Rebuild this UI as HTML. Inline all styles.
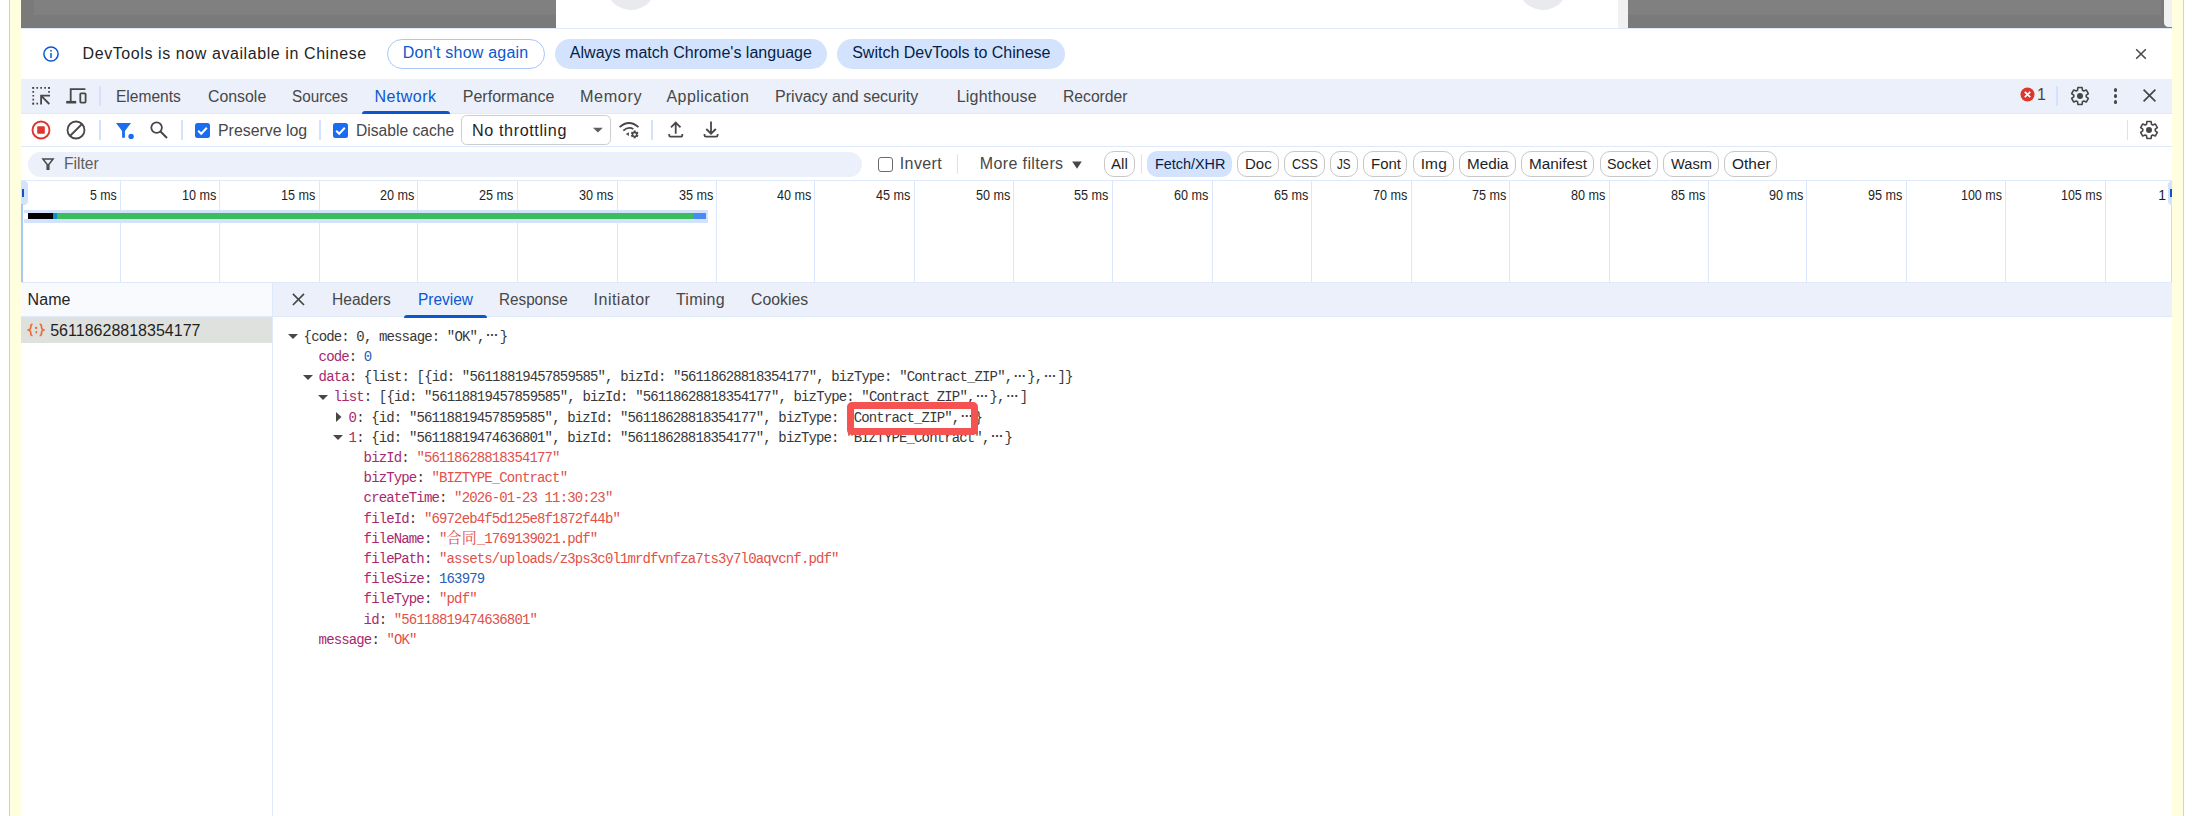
<!DOCTYPE html>
<html lang="en"><head><meta charset="utf-8"><title>DevTools - Network</title>
<style>
html,body{margin:0;padding:0;background:#fff;}
body{width:2210px;height:816px;overflow:hidden;position:relative;font-family:"Liberation Sans",sans-serif;}
body>div,body>svg,body>pre{position:absolute;box-sizing:border-box;}
.t{height:20px;line-height:20px;white-space:pre;}

.j{height:20px;line-height:20px;white-space:pre;font-family:"Liberation Mono","Noto Serif CJK SC",monospace;font-size:14px;letter-spacing:-0.862px;color:#383838;}
.j .k{color:#a8286e}.j .s{color:#e2504a}.j .n{color:#2a5db8}.j .g{color:#5e5e5e}
.j .e{display:inline-block;width:15.08px;text-align:center;letter-spacing:0;position:relative;top:-4.500px;font-family:'Liberation Sans',sans-serif;font-size:12.500px;font-weight:bold;line-height:10px;}
.j .c{font-family:"Liberation Mono","Noto Serif CJK SC",serif;font-size:15px;letter-spacing:0.08px;line-height:0;}
.pill{border:1px solid #c7c7c7;border-radius:10px;background:#fff;}

</style></head><body>
<div style="left:9px;top:0px;width:1px;height:816px;background:#cfcfcf;"></div>
<div style="left:10px;top:0px;width:11px;height:816px;background:#ffffe0;"></div>
<div style="left:2172px;top:0px;width:11px;height:816px;background:#ffffe0;"></div>
<div style="left:2183px;top:0px;width:1px;height:816px;background:#d2d2d2;"></div>
<div style="left:21px;top:0px;width:535px;height:28px;background:#7a7a7a;"></div>
<div style="left:34px;top:0px;width:522px;height:15px;background:#808080;"></div>
<div style="left:1628px;top:0px;width:544px;height:28px;background:#7a7a7a;"></div>
<div style="left:1628px;top:0px;width:533px;height:15px;background:#808080;"></div>
<div style="left:1618px;top:0px;width:10px;height:28px;background:#f1f1f1;"></div>
<div style="left:2163.6px;top:0px;width:8.4px;height:27.3px;background:#f1f1f1;border-radius:0 0 0 4.500px;"></div>
<div style="left:606px;top:-40.5px;width:50px;height:50px;background:#e8eaed;border-radius:50%;"></div>
<div style="left:1518.4px;top:-40.5px;width:50px;height:50px;background:#e8eaed;border-radius:50%;"></div>
<div style="left:21px;top:28px;width:2151px;height:1px;background:#dfe9fc;"></div>
<svg style="left:42px;top:44.5px;" width="18" height="18" viewBox="0 0 18 18"><circle cx="9" cy="9" r="7.1" fill="none" stroke="#0b57d0" stroke-width="1.5"/><rect x="8.25" y="8" width="1.5" height="5" fill="#0b57d0"/><rect x="8.25" y="5" width="1.5" height="1.6" fill="#0b57d0"/></svg>
<div class="t" style="left:82.60px;top:44.06px;font-size:16px;color:#1f1f1f;letter-spacing:0.581px;">DevTools is now available in Chinese</div>
<div style="left:386.5px;top:39px;width:158.5px;height:30px;background:#fff;border:1px solid #a8c7fa;border-radius:15px;"></div>
<div class="t" style="left:402.80px;top:43.46px;font-size:16px;color:#0b57d0;letter-spacing:0.210px;">Don't show again</div>
<div style="left:555px;top:39px;width:271.5px;height:30px;background:#d3e3fd;border-radius:15px;"></div>
<div class="t" style="left:569.80px;top:43.46px;font-size:16px;color:#041e49;letter-spacing:0.024px;">Always match Chrome's language</div>
<div style="left:837px;top:39px;width:228px;height:30px;background:#d3e3fd;border-radius:15px;"></div>
<div class="t" style="left:852.20px;top:43.46px;font-size:16px;color:#041e49;letter-spacing:0.000px;">Switch DevTools to Chinese</div>
<svg style="left:2134px;top:47px;" width="14" height="14" viewBox="0 0 14 14"><path d="M2.2 2.2L11.8 11.8M11.8 2.2L2.2 11.8" stroke="#474747" stroke-width="1.5" fill="none"/></svg>
<div style="left:21px;top:79px;width:2151px;height:34.5px;background:#ecf0fa;"></div>
<div style="left:21px;top:113px;width:2151px;height:1px;background:#dfe9fc;"></div>
<svg style="left:31px;top:86px;" width="21" height="21" viewBox="0 0 21 21"><g fill="none" stroke="#474747" stroke-width="1.700"><path d="M1.400 1.850H18.900" stroke-dasharray="1.700 2.250"/><path d="M2.250 1V18.500" stroke-dasharray="1.700 2.250"/><path d="M18.050 1V7" stroke-dasharray="1.700 2.250"/><path d="M1.400 17.650H7.500" stroke-dasharray="1.700 2.250"/></g><path d="M18.300 18L10 9.700M10.100 18.500V9.650H19" fill="none" stroke="#474747" stroke-width="1.800"/></svg>
<svg style="left:65px;top:86px;" width="23" height="21" viewBox="0 0 23 21"><path d="M5.700 15.200V3.200H20.400" fill="none" stroke="#474747" stroke-width="1.800"/><path d="M1.200 16.200H11.200" stroke="#474747" stroke-width="2.600"/><rect x="15.300" y="7.300" width="5.300" height="9.300" rx="0.800" fill="none" stroke="#474747" stroke-width="1.800"/></svg>
<div style="left:99.3px;top:86px;width:1.6px;height:20px;background:#d3e3fd;"></div>
<div class="t" style="left:116.00px;top:86.86px;font-size:16px;color:#474747;letter-spacing:0.000px;transform:scaleX(0.9715);transform-origin:0 0;">Elements</div>
<div class="t" style="left:207.50px;top:86.86px;font-size:16px;color:#474747;letter-spacing:0.000px;transform:scaleX(0.9914);transform-origin:0 0;">Console</div>
<div class="t" style="left:292.20px;top:86.86px;font-size:16px;color:#474747;letter-spacing:0.000px;transform:scaleX(0.9540);transform-origin:0 0;">Sources</div>
<div class="t" style="left:374.50px;top:86.86px;font-size:16px;color:#0b57d0;letter-spacing:0.469px;">Network</div>
<div class="t" style="left:462.80px;top:86.86px;font-size:16px;color:#474747;letter-spacing:0.000px;">Performance</div>
<div class="t" style="left:579.60px;top:86.86px;font-size:16px;color:#474747;letter-spacing:0.600px;transform:scaleX(1.0135);transform-origin:0 0;">Memory</div>
<div class="t" style="left:666.50px;top:86.86px;font-size:16px;color:#474747;letter-spacing:0.412px;">Application</div>
<div class="t" style="left:775.10px;top:86.86px;font-size:16px;color:#474747;letter-spacing:0.000px;">Privacy and security</div>
<div class="t" style="left:956.80px;top:86.86px;font-size:16px;color:#474747;letter-spacing:0.178px;">Lighthouse</div>
<div class="t" style="left:1062.70px;top:86.86px;font-size:16px;color:#474747;letter-spacing:0.000px;transform:scaleX(0.9801);transform-origin:0 0;">Recorder</div>
<div style="left:362px;top:110.5px;width:88px;height:3px;background:#0b57d0;border-radius:3px 3px 0 0;"></div>
<svg style="left:2019.5px;top:87.1px;" width="15" height="15" viewBox="0 0 15 15"><circle cx="7.5" cy="7.5" r="7" fill="#dc362e"/><path d="M4.8 4.8l5.4 5.4M10.2 4.8l-5.4 5.4" stroke="#fff" stroke-width="1.7"/></svg>
<div class="t" style="left:2037.00px;top:85.16px;font-size:16px;color:#474747;letter-spacing:0.000px;">1</div>
<div style="left:2056.1px;top:86px;width:1.6px;height:19.7px;background:#d3e3fd;"></div>
<svg style="left:2070.4px;top:85.7px;" width="20" height="20" viewBox="0 0 20 20"><path d="M7.54 4.20L7.90 1.56L12.10 1.56L12.46 4.20L13.79 4.97L16.26 3.96L18.36 7.60L16.25 9.23L16.25 10.77L18.36 12.40L16.26 16.04L13.79 15.03L12.46 15.80L12.10 18.44L7.90 18.44L7.54 15.80L6.21 15.03L3.74 16.04L1.64 12.40L3.75 10.77L3.75 9.23L1.64 7.60L3.74 3.96L6.21 4.97z" fill="none" stroke="#474747" stroke-width="1.600" stroke-linejoin="round"/><circle cx="10" cy="10" r="3" fill="#474747"/></svg>
<div style="left:2113.6px;top:88.3px;width:3.8px;height:3.8px;background:#474747;border-radius:50%;"></div>
<div style="left:2113.6px;top:94.0px;width:3.8px;height:3.8px;background:#474747;border-radius:50%;"></div>
<div style="left:2113.6px;top:99.8px;width:3.8px;height:3.8px;background:#474747;border-radius:50%;"></div>
<svg style="left:2141.7px;top:88.4px;" width="15" height="15" viewBox="0 0 15 15"><path d="M1.6 1.6L13.4 13.4M13.4 1.6L1.6 13.4" stroke="#474747" stroke-width="1.7" fill="none"/></svg>
<div style="left:21px;top:146px;width:2151px;height:1px;background:#dfe9fc;"></div>
<svg style="left:30.25px;top:119.4px;" width="22" height="22" viewBox="0 0 22 22"><circle cx="11" cy="11" r="8.500" fill="none" stroke="#dc362e" stroke-width="1.900"/><rect x="7.200" y="7.200" width="7.600" height="7.600" rx="0.800" fill="#dc362e"/></svg>
<svg style="left:65.4px;top:119.4px;" width="22" height="22" viewBox="0 0 22 22"><circle cx="11" cy="11" r="8.500" fill="none" stroke="#474747" stroke-width="1.800"/><path d="M17 5L5 17" stroke="#474747" stroke-width="1.800"/></svg>
<div style="left:99.3px;top:120.3px;width:1.6px;height:20.2px;background:#d3e3fd;"></div>
<svg style="left:115px;top:121px;" width="20" height="19" viewBox="0 0 20 19"><path d="M1 2h15l-6.100 8v6.800h-2.800V10z" fill="#1a6cf0"/><circle cx="16.100" cy="15.400" r="2.700" fill="#1a6cf0"/></svg>
<svg style="left:149px;top:120px;" width="20" height="20" viewBox="0 0 20 20"><circle cx="7.600" cy="7.600" r="5.300" fill="none" stroke="#474747" stroke-width="1.800"/><path d="M11.500 11.500L18 18" stroke="#474747" stroke-width="1.900"/></svg>
<div style="left:181.4px;top:120.3px;width:1.6px;height:20.2px;background:#d3e3fd;"></div>
<svg style="left:195px;top:123px;" width="15" height="15" viewBox="0 0 15 15"><rect x="0" y="0" width="15" height="15" rx="2.500" fill="#1a6cf0"/><path d="M3.200 7.700l3 3 5.600-6" fill="none" stroke="#fff" stroke-width="2"/></svg>
<div class="t" style="left:217.80px;top:120.76px;font-size:16px;color:#474747;letter-spacing:0.000px;transform:scaleX(0.9930);transform-origin:0 0;">Preserve log</div>
<div style="left:319px;top:120.3px;width:1.6px;height:20.2px;background:#d3e3fd;"></div>
<svg style="left:333.2px;top:123px;" width="15" height="15" viewBox="0 0 15 15"><rect x="0" y="0" width="15" height="15" rx="2.500" fill="#1a6cf0"/><path d="M3.200 7.700l3 3 5.600-6" fill="none" stroke="#fff" stroke-width="2"/></svg>
<div class="t" style="left:356.00px;top:120.76px;font-size:16px;color:#474747;letter-spacing:0.000px;transform:scaleX(0.9771);transform-origin:0 0;">Disable cache</div>
<div style="left:460.8px;top:115px;width:150px;height:30.3px;background:#fff;border:1px solid #cdcdcd;border-radius:5.500px;"></div>
<div class="t" style="left:471.80px;top:120.76px;font-size:16px;color:#1f1f1f;letter-spacing:0.600px;transform:scaleX(1.0100);transform-origin:0 0;">No throttling</div>
<svg style="left:591.6px;top:127.2px;" width="12" height="7" viewBox="0 0 12 7"><path d="M1 0.800h9.800L5.900 5.600z" fill="#5e5e5e"/></svg>
<svg style="left:618px;top:120px;" width="22" height="20" viewBox="0 0 22 20"><path d="M1.600 7.200Q11 -1.200 20.500 7.200" fill="none" stroke="#474747" stroke-width="1.800"/><path d="M5.300 10.600Q10.500 6.200 15.300 9" fill="none" stroke="#474747" stroke-width="1.800"/><path d="M7.800 14.100L10.900 12.300V15.900z" fill="#474747"/><path d="M15.42 11.99L15.61 10.54L17.69 10.54L17.88 11.99L18.12 12.14L19.48 11.57L20.51 13.36L19.35 14.26L19.35 14.54L20.51 15.44L19.48 17.23L18.12 16.66L17.88 16.81L17.69 18.26L15.61 18.26L15.42 16.81L15.18 16.66L13.82 17.23L12.79 15.44L13.95 14.54L13.95 14.26L12.79 13.36L13.82 11.57L15.18 12.14z" fill="#474747"/><circle cx="16.650" cy="14.400" r="1.250" fill="#fff"/></svg>
<div style="left:651.4px;top:120.3px;width:1.6px;height:20.2px;background:#d3e3fd;"></div>
<svg style="left:667px;top:120px;" width="18" height="20" viewBox="0 0 18 20"><path d="M8.700 13.700V3M4 7.300L8.700 2.600L13.500 7.300" fill="none" stroke="#474747" stroke-width="1.800"/><path d="M2.200 14.100v1.100a1.500 1.500 0 0 0 1.500 1.500h10.100a1.500 1.500 0 0 0 1.500-1.500V14.100" fill="none" stroke="#474747" stroke-width="1.800"/></svg>
<svg style="left:702px;top:120px;" width="18" height="20" viewBox="0 0 18 20"><path d="M9 1.500V13.300M4.300 9L9 13.700L13.800 9" fill="none" stroke="#474747" stroke-width="1.800"/><path d="M2.500 14.100v1.100a1.500 1.500 0 0 0 1.500 1.500h10.100a1.500 1.500 0 0 0 1.500-1.500V14.100" fill="none" stroke="#474747" stroke-width="1.800"/></svg>
<div style="left:2126.7px;top:120.3px;width:1.6px;height:20.2px;background:#d3e3fd;"></div>
<svg style="left:2139.4px;top:120.4px;" width="20" height="20" viewBox="0 0 20 20"><path d="M7.54 4.20L7.90 1.56L12.10 1.56L12.46 4.20L13.79 4.97L16.26 3.96L18.36 7.60L16.25 9.23L16.25 10.77L18.36 12.40L16.26 16.04L13.79 15.03L12.46 15.80L12.10 18.44L7.90 18.44L7.54 15.80L6.21 15.03L3.74 16.04L1.64 12.40L3.75 10.77L3.75 9.23L1.64 7.60L3.74 3.96L6.21 4.97z" fill="none" stroke="#474747" stroke-width="1.600" stroke-linejoin="round"/><circle cx="10" cy="10" r="3" fill="#474747"/></svg>
<div style="left:28.2px;top:151.5px;width:834px;height:25.2px;background:#ecf0fa;border-radius:13px;"></div>
<svg style="left:41px;top:157px;" width="14" height="14" viewBox="0 0 14 14"><path d="M1.900 1.900h10.200L7.800 7.500v4.800H6.200V7.500z" fill="none" stroke="#474747" stroke-width="1.500" stroke-linejoin="miter"/></svg>
<div class="t" style="left:63.60px;top:154.36px;font-size:16px;color:#5e5e5e;letter-spacing:0.000px;transform:scaleX(0.9786);transform-origin:0 0;">Filter</div>
<div style="left:877.8px;top:156.6px;width:15px;height:15px;background:#fff;border:1.300px solid #6b6b6b;border-radius:3px;"></div>
<div class="t" style="left:899.80px;top:154.36px;font-size:16px;color:#474747;letter-spacing:0.377px;">Invert</div>
<div style="left:956.6px;top:153.7px;width:1.3px;height:20px;background:#d3e3fd;"></div>
<div class="t" style="left:979.80px;top:154.36px;font-size:16px;color:#474747;letter-spacing:0.380px;">More filters</div>
<svg style="left:1071.9px;top:160.6px;" width="10" height="8" viewBox="0 0 10 8"><path d="M0.200 0.400h9.600L5 7.800z" fill="#474747"/></svg>
<div class="pill" style="left:1103.8px;top:151.200px;width:31.2px;height:25.500px;"></div>
<div class="t" style="left:1111.30px;top:153.53px;font-size:15.5px;color:#1f1f1f;letter-spacing:0.000px;transform:scaleX(0.9748);transform-origin:0 0;">All</div>
<div style="left:1147.2px;top:151.2px;width:84.79999999999995px;height:25.5px;background:#d3e3fd;border-radius:10px;"></div>
<div class="t" style="left:1154.70px;top:153.53px;font-size:15.5px;color:#041e49;letter-spacing:0.000px;transform:scaleX(0.9286);transform-origin:0 0;">Fetch/XHR</div>
<div class="pill" style="left:1237.1px;top:151.200px;width:41.8px;height:25.500px;"></div>
<div class="t" style="left:1245.00px;top:153.53px;font-size:15.5px;color:#1f1f1f;letter-spacing:0.000px;transform:scaleX(0.9682);transform-origin:0 0;">Doc</div>
<div class="pill" style="left:1284.3px;top:151.200px;width:40.5px;height:25.500px;"></div>
<div class="t" style="left:1291.50px;top:153.53px;font-size:15.5px;color:#1f1f1f;letter-spacing:0.000px;transform:scaleX(0.8094);transform-origin:0 0;">CSS</div>
<div class="pill" style="left:1330px;top:151.200px;width:27.9px;height:25.500px;"></div>
<div class="t" style="left:1337.10px;top:153.53px;font-size:15.5px;color:#1f1f1f;letter-spacing:0.000px;transform:scaleX(0.7516);transform-origin:0 0;">JS</div>
<div class="pill" style="left:1363.4px;top:151.200px;width:44.0px;height:25.500px;"></div>
<div class="t" style="left:1370.90px;top:153.53px;font-size:15.5px;color:#1f1f1f;letter-spacing:0.000px;transform:scaleX(0.9640);transform-origin:0 0;">Font</div>
<div class="pill" style="left:1413.2px;top:151.200px;width:40.4px;height:25.500px;"></div>
<div class="t" style="left:1420.70px;top:153.53px;font-size:15.5px;color:#1f1f1f;letter-spacing:0.128px;">Img</div>
<div class="pill" style="left:1459.4px;top:151.200px;width:56.6px;height:25.500px;"></div>
<div class="t" style="left:1467.20px;top:153.53px;font-size:15.5px;color:#1f1f1f;letter-spacing:0.000px;transform:scaleX(0.9853);transform-origin:0 0;">Media</div>
<div class="pill" style="left:1521.4px;top:151.200px;width:72.6px;height:25.500px;"></div>
<div class="t" style="left:1528.90px;top:153.53px;font-size:15.5px;color:#1f1f1f;letter-spacing:0.000px;transform:scaleX(0.9882);transform-origin:0 0;">Manifest</div>
<div class="pill" style="left:1599.8px;top:151.200px;width:58.1px;height:25.500px;"></div>
<div class="t" style="left:1607.00px;top:153.53px;font-size:15.5px;color:#1f1f1f;letter-spacing:0.000px;transform:scaleX(0.9221);transform-origin:0 0;">Socket</div>
<div class="pill" style="left:1663.4px;top:151.200px;width:55.3px;height:25.500px;"></div>
<div class="t" style="left:1670.90px;top:153.53px;font-size:15.5px;color:#1f1f1f;letter-spacing:0.000px;transform:scaleX(0.9436);transform-origin:0 0;">Wasm</div>
<div class="pill" style="left:1724.1px;top:151.200px;width:53.3px;height:25.500px;"></div>
<div class="t" style="left:1731.60px;top:153.53px;font-size:15.5px;color:#1f1f1f;letter-spacing:0.000px;transform:scaleX(0.9957);transform-origin:0 0;">Other</div>
<div style="left:1141px;top:154px;width:1px;height:19.5px;background:#d3e3fd;"></div>
<div style="left:21px;top:180px;width:2151px;height:1px;background:#dfe9fc;"></div>
<div style="left:21px;top:282px;width:2151px;height:1px;background:#dfe9fc;"></div>
<div style="left:120px;top:181px;width:1px;height:101px;background:#dce7fd;"></div>
<div class="t" style="left:89.70px;top:184.55px;font-size:14px;color:#1f1f1f;letter-spacing:0.000px;transform:scaleX(0.8832);transform-origin:0 0;">5 ms</div>
<div style="left:219px;top:181px;width:1px;height:101px;background:#dce7fd;"></div>
<div class="t" style="left:181.60px;top:184.55px;font-size:14px;color:#1f1f1f;letter-spacing:0.000px;transform:scaleX(0.9023);transform-origin:0 0;">10 ms</div>
<div style="left:319px;top:181px;width:1px;height:101px;background:#dce7fd;"></div>
<div class="t" style="left:281.10px;top:184.55px;font-size:14px;color:#1f1f1f;letter-spacing:0.000px;transform:scaleX(0.9023);transform-origin:0 0;">15 ms</div>
<div style="left:417px;top:181px;width:1px;height:101px;background:#dce7fd;"></div>
<div class="t" style="left:379.90px;top:184.55px;font-size:14px;color:#1f1f1f;letter-spacing:0.000px;transform:scaleX(0.9023);transform-origin:0 0;">20 ms</div>
<div style="left:517px;top:181px;width:1px;height:101px;background:#dce7fd;"></div>
<div class="t" style="left:479.30px;top:184.55px;font-size:14px;color:#1f1f1f;letter-spacing:0.000px;transform:scaleX(0.9023);transform-origin:0 0;">25 ms</div>
<div style="left:617px;top:181px;width:1px;height:101px;background:#dce7fd;"></div>
<div class="t" style="left:579.10px;top:184.55px;font-size:14px;color:#1f1f1f;letter-spacing:0.000px;transform:scaleX(0.9023);transform-origin:0 0;">30 ms</div>
<div style="left:716px;top:181px;width:1px;height:101px;background:#dce7fd;"></div>
<div class="t" style="left:678.60px;top:184.55px;font-size:14px;color:#1f1f1f;letter-spacing:0.000px;transform:scaleX(0.9023);transform-origin:0 0;">35 ms</div>
<div style="left:814px;top:181px;width:1px;height:101px;background:#dce7fd;"></div>
<div class="t" style="left:776.60px;top:184.55px;font-size:14px;color:#1f1f1f;letter-spacing:0.000px;transform:scaleX(0.9023);transform-origin:0 0;">40 ms</div>
<div style="left:914px;top:181px;width:1px;height:101px;background:#dce7fd;"></div>
<div class="t" style="left:876.10px;top:184.55px;font-size:14px;color:#1f1f1f;letter-spacing:0.000px;transform:scaleX(0.9023);transform-origin:0 0;">45 ms</div>
<div style="left:1013px;top:181px;width:1px;height:101px;background:#dce7fd;"></div>
<div class="t" style="left:975.50px;top:184.55px;font-size:14px;color:#1f1f1f;letter-spacing:0.000px;transform:scaleX(0.9023);transform-origin:0 0;">50 ms</div>
<div style="left:1112px;top:181px;width:1px;height:101px;background:#dce7fd;"></div>
<div class="t" style="left:1074.30px;top:184.55px;font-size:14px;color:#1f1f1f;letter-spacing:0.000px;transform:scaleX(0.9023);transform-origin:0 0;">55 ms</div>
<div style="left:1212px;top:181px;width:1px;height:101px;background:#dce7fd;"></div>
<div class="t" style="left:1174.10px;top:184.55px;font-size:14px;color:#1f1f1f;letter-spacing:0.000px;transform:scaleX(0.9023);transform-origin:0 0;">60 ms</div>
<div style="left:1311px;top:181px;width:1px;height:101px;background:#dce7fd;"></div>
<div class="t" style="left:1273.60px;top:184.55px;font-size:14px;color:#1f1f1f;letter-spacing:0.000px;transform:scaleX(0.9023);transform-origin:0 0;">65 ms</div>
<div style="left:1411px;top:181px;width:1px;height:101px;background:#dce7fd;"></div>
<div class="t" style="left:1373.40px;top:184.55px;font-size:14px;color:#1f1f1f;letter-spacing:0.000px;transform:scaleX(0.9023);transform-origin:0 0;">70 ms</div>
<div style="left:1509px;top:181px;width:1px;height:101px;background:#dce7fd;"></div>
<div class="t" style="left:1471.90px;top:184.55px;font-size:14px;color:#1f1f1f;letter-spacing:0.000px;transform:scaleX(0.9023);transform-origin:0 0;">75 ms</div>
<div style="left:1609px;top:181px;width:1px;height:101px;background:#dce7fd;"></div>
<div class="t" style="left:1571.30px;top:184.55px;font-size:14px;color:#1f1f1f;letter-spacing:0.000px;transform:scaleX(0.9023);transform-origin:0 0;">80 ms</div>
<div style="left:1708px;top:181px;width:1px;height:101px;background:#dce7fd;"></div>
<div class="t" style="left:1670.80px;top:184.55px;font-size:14px;color:#1f1f1f;letter-spacing:0.000px;transform:scaleX(0.9023);transform-origin:0 0;">85 ms</div>
<div style="left:1806px;top:181px;width:1px;height:101px;background:#dce7fd;"></div>
<div class="t" style="left:1768.60px;top:184.55px;font-size:14px;color:#1f1f1f;letter-spacing:0.000px;transform:scaleX(0.9023);transform-origin:0 0;">90 ms</div>
<div style="left:1906px;top:181px;width:1px;height:101px;background:#dce7fd;"></div>
<div class="t" style="left:1868.40px;top:184.55px;font-size:14px;color:#1f1f1f;letter-spacing:0.000px;transform:scaleX(0.9023);transform-origin:0 0;">95 ms</div>
<div style="left:2005px;top:181px;width:1px;height:101px;background:#dce7fd;"></div>
<div class="t" style="left:1961.30px;top:184.55px;font-size:14px;color:#1f1f1f;letter-spacing:0.000px;transform:scaleX(0.8906);transform-origin:0 0;">100 ms</div>
<div style="left:2105px;top:181px;width:1px;height:101px;background:#dce7fd;"></div>
<div class="t" style="left:2061.10px;top:184.55px;font-size:14px;color:#1f1f1f;letter-spacing:0.000px;transform:scaleX(0.8906);transform-origin:0 0;">105 ms</div>
<div class="t" style="left:2158.30px;top:184.55px;font-size:14px;color:#1f1f1f;letter-spacing:0.000px;">1</div>
<div style="left:21px;top:181px;width:7px;height:23.5px;background:#d3e3fd;border-radius:0 4px 4px 0;"></div>
<div style="left:22.1px;top:188.8px;width:1.9px;height:8.2px;background:#0b57d0;"></div>
<div style="left:21px;top:204px;width:2.3px;height:78px;background:#a8c7fa;"></div>
<div style="left:21px;top:283px;width:1px;height:33px;background:#d9e5fc;"></div>
<div style="left:2171px;top:204px;width:1px;height:78px;background:#c9dbfa;"></div>
<div style="left:2167.5px;top:181px;width:4.5px;height:23.5px;background:#d3e3fd;border-radius:4px 0 0 4px;"></div>
<div style="left:2170.1px;top:188.8px;width:1.9px;height:8.2px;background:#0b57d0;"></div>
<div style="left:23.6px;top:210.4px;width:684.8px;height:12.2px;background:#d3e3fd;"></div>
<div style="left:23.8px;top:213px;width:4.2px;height:6.3px;background:#fff;"></div>
<div style="left:28px;top:213px;width:25.3px;height:6.3px;background:#000;"></div>
<div style="left:53.3px;top:213px;width:3.3px;height:6.3px;background:#0c8fc4;"></div>
<div style="left:56.6px;top:213px;width:637.2px;height:6.3px;background:#3bbd5e;"></div>
<div style="left:693.8px;top:213px;width:12.2px;height:6.3px;background:#4a8af4;"></div>
<div style="left:21px;top:283px;width:251.5px;height:33.5px;background:#f8fafd;"></div>
<div style="left:21px;top:316px;width:251.5px;height:1px;background:#dfe9fc;"></div>
<div class="t" style="left:27.60px;top:290.26px;font-size:16px;color:#1f1f1f;letter-spacing:0.071px;">Name</div>
<div style="left:21px;top:317px;width:251.5px;height:25.5px;background:#dfe1de;"></div>
<svg style="left:26.95px;top:322.5px;" width="18" height="14" viewBox="0 0 18 14"><g transform="scale(1.013,0.877)"><path d="M5.500 1.500C3.500 1.500 3.700 3.500 3.700 5.200 3.700 6.900 2.800 7.600 1.500 8c1.300.4 2.200 1.100 2.200 2.800 0 1.700-.2 3.700 1.800 3.700M12.500 1.500c2 0 1.800 2 1.800 3.700 0 1.700.9 2.400 2.200 2.800-1.300.4-2.200 1.100-2.200 2.800 0 1.700.2 3.700-1.800 3.700" fill="none" stroke="#ea6c33" stroke-width="1.700"/><circle cx="9" cy="5.600" r="1.200" fill="#ea6c33"/><path d="M9 9.200c.8 0 1.200.5 1.200 1.200 0 1-.6 1.800-1.600 2.200l-.3-.6c.5-.3.700-.6.700-1-.5-.1-.9-.4-.9-.9 0-.5.400-.900.900-.900z" fill="#ea6c33"/></g></svg>
<div class="t" style="left:50.20px;top:320.66px;font-size:16px;color:#1f1f1f;letter-spacing:0.013px;">56118628818354177</div>
<div style="left:272px;top:283px;width:1px;height:533px;background:#dfe9fc;"></div>
<div style="left:273px;top:283px;width:1899px;height:33px;background:#ecf0fa;"></div>
<div style="left:273px;top:316px;width:1899px;height:1px;background:#dfe9fc;"></div>
<svg style="left:291px;top:291.9px;" width="15" height="15" viewBox="0 0 15 15"><path d="M1.900 1.900L13 13M13 1.900L1.900 13" stroke="#474747" stroke-width="1.700" fill="none"/></svg>
<div class="t" style="left:331.70px;top:290.26px;font-size:16px;color:#474747;letter-spacing:0.000px;transform:scaleX(0.9722);transform-origin:0 0;">Headers</div>
<div class="t" style="left:417.50px;top:290.26px;font-size:16px;color:#0b57d0;letter-spacing:0.000px;transform:scaleX(0.9665);transform-origin:0 0;">Preview</div>
<div class="t" style="left:499.10px;top:290.26px;font-size:16px;color:#474747;letter-spacing:0.000px;transform:scaleX(0.9535);transform-origin:0 0;">Response</div>
<div class="t" style="left:593.60px;top:290.26px;font-size:16px;color:#474747;letter-spacing:0.479px;">Initiator</div>
<div class="t" style="left:675.90px;top:290.26px;font-size:16px;color:#474747;letter-spacing:0.256px;">Timing</div>
<div class="t" style="left:750.80px;top:290.26px;font-size:16px;color:#474747;letter-spacing:0.000px;transform:scaleX(0.9877);transform-origin:0 0;">Cookies</div>
<div style="left:404.2px;top:314.8px;width:82.8px;height:3.2px;background:#0b57d0;border-radius:3px 3px 0 0;"></div>
<div class="j" style="left:303.6px;top:326.75px;">{code: 0, message: &quot;OK&quot;,<span class="e">…</span>}</div>
<svg style="left:288.3px;top:334.3px;" width="10" height="5" viewBox="0 0 10 5"><path d="M0 0h10L5 5z" fill="#474747"/></svg>
<div class="j" style="left:318.6px;top:346.95px;"><span class="k">code</span>: <span class="n">0</span></div>
<div class="j" style="left:318.6px;top:367.15px;"><span class="k">data</span>: {list: [{id: &quot;56118819457859585&quot;, bizId: &quot;56118628818354177&quot;, bizType: &quot;Contract_ZIP&quot;,<span class="e">…</span>},<span class="e">…</span>]}</div>
<svg style="left:303.3px;top:374.7px;" width="10" height="5" viewBox="0 0 10 5"><path d="M0 0h10L5 5z" fill="#474747"/></svg>
<div class="j" style="left:333.6px;top:387.35px;"><span class="k">list</span>: [{id: &quot;56118819457859585&quot;, bizId: &quot;56118628818354177&quot;, bizType: &quot;Contract_ZIP&quot;,<span class="e">…</span>},<span class="e">…</span>]</div>
<svg style="left:318.3px;top:394.9px;" width="10" height="5" viewBox="0 0 10 5"><path d="M0 0h10L5 5z" fill="#474747"/></svg>
<div class="j" style="left:348.6px;top:407.55px;"><span class="k">0</span>: {id: &quot;56118819457859585&quot;, bizId: &quot;56118628818354177&quot;, bizType: &quot;Contract_ZIP&quot;,<span class="e">…</span>}</div>
<svg style="left:336.0px;top:412.2px;" width="5.5" height="10" viewBox="0 0 5.5 10"><path d="M0 0v10L5.500 5z" fill="#474747"/></svg>
<div class="j" style="left:348.6px;top:427.75px;"><span class="k">1</span>: {id: &quot;56118819474636801&quot;, bizId: &quot;56118628818354177&quot;, bizType: &quot;BIZTYPE_Contract&quot;,<span class="e">…</span>}</div>
<svg style="left:333.3px;top:435.3px;" width="10" height="5" viewBox="0 0 10 5"><path d="M0 0h10L5 5z" fill="#474747"/></svg>
<div class="j" style="left:363.6px;top:447.95px;"><span class="k">bizId</span>: <span class="s">&quot;56118628818354177&quot;</span></div>
<div class="j" style="left:363.6px;top:468.15px;"><span class="k">bizType</span>: <span class="s">&quot;BIZTYPE_Contract&quot;</span></div>
<div class="j" style="left:363.6px;top:488.35px;"><span class="k">createTime</span>: <span class="s">&quot;2026-01-23 11:30:23&quot;</span></div>
<div class="j" style="left:363.6px;top:508.55px;"><span class="k">fileId</span>: <span class="s">&quot;6972eb4f5d125e8f1872f44b&quot;</span></div>
<div class="j" style="left:363.6px;top:528.75px;"><span class="k">fileName</span>: <span class="s">&quot;<span class="c">合同</span>_1769139021.pdf&quot;</span></div>
<div class="j" style="left:363.6px;top:548.95px;"><span class="k">filePath</span>: <span class="s">&quot;assets/uploads/z3ps3c0l1mrdfvnfza7ts3y7l0aqvcnf.pdf&quot;</span></div>
<div class="j" style="left:363.6px;top:569.15px;"><span class="k">fileSize</span>: <span class="n">163979</span></div>
<div class="j" style="left:363.6px;top:589.35px;"><span class="k">fileType</span>: <span class="s">&quot;pdf&quot;</span></div>
<div class="j" style="left:363.6px;top:609.55px;"><span class="k">id</span>: <span class="s">&quot;56118819474636801&quot;</span></div>
<div class="j" style="left:318.6px;top:629.75px;"><span class="k">message</span>: <span class="s">&quot;OK&quot;</span></div>
<div style="left:847px;top:402px;width:131px;height:33px;background:transparent;border:7px solid #f55252;border-radius:5px;"></div>
</body></html>
